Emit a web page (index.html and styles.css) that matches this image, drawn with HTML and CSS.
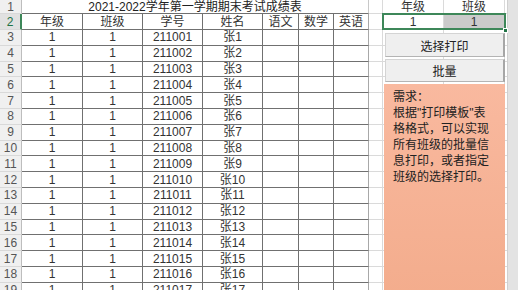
FILE: index.html
```html
<!DOCTYPE html>
<html lang="zh-CN">
<head>
<meta charset="utf-8">
<title>成绩表</title>
<link rel="stylesheet" href="styles.css">
</head>
<body>
<div class="screen">
  <div class="sheet">
    <div class="rh">1</div><div class="title">2021-2022学年第一学期期末考试成绩表</div><div class="g"></div><div class="g">年级</div><div class="g">班级</div><div class="g e"></div>
    <div class="rh sel">2</div><div class="t">年级</div><div class="t">班级</div><div class="t">学号</div><div class="t">姓名</div><div class="t">语文</div><div class="t">数学</div><div class="t last">英语</div><div class="g"></div><div class="g">1</div><div class="g shade">1</div><div class="g e"></div>
    <div class="rh">3</div><div class="t">1</div><div class="t">1</div><div class="t">211001</div><div class="t">张1</div><div class="t"></div><div class="t"></div><div class="t last"></div><div class="g"></div><div class="g"></div><div class="g"></div><div class="g e"></div>
    <div class="rh">4</div><div class="t">1</div><div class="t">1</div><div class="t">211002</div><div class="t">张2</div><div class="t"></div><div class="t"></div><div class="t last"></div><div class="g"></div><div class="g"></div><div class="g"></div><div class="g e"></div>
    <div class="rh">5</div><div class="t">1</div><div class="t">1</div><div class="t">211003</div><div class="t">张3</div><div class="t"></div><div class="t"></div><div class="t last"></div><div class="g"></div><div class="g"></div><div class="g"></div><div class="g e"></div>
    <div class="rh">6</div><div class="t">1</div><div class="t">1</div><div class="t">211004</div><div class="t">张4</div><div class="t"></div><div class="t"></div><div class="t last"></div><div class="g"></div><div class="g"></div><div class="g"></div><div class="g e"></div>
    <div class="rh">7</div><div class="t">1</div><div class="t">1</div><div class="t">211005</div><div class="t">张5</div><div class="t"></div><div class="t"></div><div class="t last"></div><div class="g"></div><div class="g"></div><div class="g"></div><div class="g e"></div>
    <div class="rh">8</div><div class="t">1</div><div class="t">1</div><div class="t">211006</div><div class="t">张6</div><div class="t"></div><div class="t"></div><div class="t last"></div><div class="g"></div><div class="g"></div><div class="g"></div><div class="g e"></div>
    <div class="rh">9</div><div class="t">1</div><div class="t">1</div><div class="t">211007</div><div class="t">张7</div><div class="t"></div><div class="t"></div><div class="t last"></div><div class="g"></div><div class="g"></div><div class="g"></div><div class="g e"></div>
    <div class="rh">10</div><div class="t">1</div><div class="t">1</div><div class="t">211008</div><div class="t">张8</div><div class="t"></div><div class="t"></div><div class="t last"></div><div class="g"></div><div class="g"></div><div class="g"></div><div class="g e"></div>
    <div class="rh">11</div><div class="t">1</div><div class="t">1</div><div class="t">211009</div><div class="t">张9</div><div class="t"></div><div class="t"></div><div class="t last"></div><div class="g"></div><div class="g"></div><div class="g"></div><div class="g e"></div>
    <div class="rh">12</div><div class="t">1</div><div class="t">1</div><div class="t">211010</div><div class="t">张10</div><div class="t"></div><div class="t"></div><div class="t last"></div><div class="g"></div><div class="g"></div><div class="g"></div><div class="g e"></div>
    <div class="rh">13</div><div class="t">1</div><div class="t">1</div><div class="t">211011</div><div class="t">张11</div><div class="t"></div><div class="t"></div><div class="t last"></div><div class="g"></div><div class="g"></div><div class="g"></div><div class="g e"></div>
    <div class="rh">14</div><div class="t">1</div><div class="t">1</div><div class="t">211012</div><div class="t">张12</div><div class="t"></div><div class="t"></div><div class="t last"></div><div class="g"></div><div class="g"></div><div class="g"></div><div class="g e"></div>
    <div class="rh">15</div><div class="t">1</div><div class="t">1</div><div class="t">211013</div><div class="t">张13</div><div class="t"></div><div class="t"></div><div class="t last"></div><div class="g"></div><div class="g"></div><div class="g"></div><div class="g e"></div>
    <div class="rh">16</div><div class="t">1</div><div class="t">1</div><div class="t">211014</div><div class="t">张14</div><div class="t"></div><div class="t"></div><div class="t last"></div><div class="g"></div><div class="g"></div><div class="g"></div><div class="g e"></div>
    <div class="rh">17</div><div class="t">1</div><div class="t">1</div><div class="t">211015</div><div class="t">张15</div><div class="t"></div><div class="t"></div><div class="t last"></div><div class="g"></div><div class="g"></div><div class="g"></div><div class="g e"></div>
    <div class="rh">18</div><div class="t">1</div><div class="t">1</div><div class="t">211016</div><div class="t">张16</div><div class="t"></div><div class="t"></div><div class="t last"></div><div class="g"></div><div class="g"></div><div class="g"></div><div class="g e"></div>
    <div class="rh">19</div><div class="t">1</div><div class="t">1</div><div class="t">211017</div><div class="t">张17</div><div class="t"></div><div class="t"></div><div class="t last"></div><div class="g"></div><div class="g"></div><div class="g"></div><div class="g e"></div>
  </div>
  <div class="vscroll"></div>

  <div class="selbox"></div>
  <div class="handle"></div>

  <div class="panel">
    <div class="btn">选择打印</div>
    <div class="btn b2">批量</div>
    <div class="note">
      <div>需求：</div>
      <div>根据&quot;打印模板&quot;表</div>
      <div>格格式，可以实现</div>
      <div>所有班级的批量信</div>
      <div>息打印，或者指定</div>
      <div>班级的选择打印。</div>
    </div>
  </div>
</div>
</body>
</html>
```

FILE: styles.css
```css
html, body {
  margin: 0;
  padding: 0;
}
body {
  width: 518px;
  height: 290px;
  overflow: hidden;
  background: #ffffff;
  font-family: "Liberation Sans", "Noto Sans CJK SC", sans-serif;
  font-size: 12px;
  color: #333333;
}
.screen {
  position: relative;
  display: flex;
  width: 518px;
  height: 290px;
}
.sheet {
  display: grid;
  grid-template-columns: 22px 61px 60px 60px 60px 36px 35px 35px 14px 61px 61px 2px;
  grid-template-rows: 14px 16px repeat(17, 15.8px);
  align-content: start;
  width: 507px;
  height: 290px;
  overflow: hidden;
  flex: none;
}
.sheet > div {
  box-sizing: border-box;
  display: flex;
  align-items: center;
  justify-content: center;
  white-space: nowrap;
  overflow: hidden;
  line-height: 1;
}
.rh {
  background: #f0f0f0;
  border-right: 1px solid #bdbdbd;
  border-bottom: 1px solid #d9d9d9;
  color: #555555;
  font-size: 12px;
}
.rh.sel {
  background: #e1e1e1;
  border-right: 2px solid #3d8759;
  color: #217346;
}
.t {
  border-right: 1px solid #707070;
  border-bottom: 1px solid #707070;
}
.t.last {
  border-right-color: #a8a8a8;
}
.title {
  grid-column: span 7;
  border-bottom: 1px solid #707070;
  border-right: 1px solid #c8c8c8;
  color: #222222;
}
.g {
  border-right: 1px solid #dadada;
  border-bottom: 1px solid #dadada;
}
.g.e {
  border-right: none;
}
.shade {
  background: #cbcbcb;
}
.vscroll {
  flex: 1;
  background: #e3e3e3;
  border-left: 1px solid #d0d0d0;
}
.selbox {
  position: absolute;
  left: 382px;
  top: 13px;
  width: 124px;
  height: 17px;
  box-sizing: border-box;
  border: 2px solid #3d8759;
}
.handle {
  position: absolute;
  left: 503px;
  top: 28px;
  width: 5px;
  height: 5px;
  box-sizing: border-box;
  background: #217346;
  border: 1px solid #ffffff;
}
.panel {
  position: absolute;
  left: 384px;
  top: 33px;
  width: 121px;
  display: flex;
  flex-direction: column;
  gap: 2px;
}
.btn {
  margin-left: 1px;
  width: 120px;
  height: 24px;
  box-sizing: border-box;
  background: #efefef;
  border: 1px solid #d4d4d4;
  border-right: 2px solid #a6a6a6;
  border-bottom: 1px solid #b4b4b4;
  display: flex;
  align-items: center;
  justify-content: center;
  font-family: "Noto Sans CJK SC", sans-serif;
  font-size: 12px;
  color: #222222;
}
.btn.b2 {
  height: 23px;
}
.note {
  height: 220px;
  box-sizing: border-box;
  background: linear-gradient(#f9b99f, #f3ac8c);
  padding: 5px 0 0 9px;
  font-size: 12px;
  line-height: 16px;
  color: #222222;
}
```
